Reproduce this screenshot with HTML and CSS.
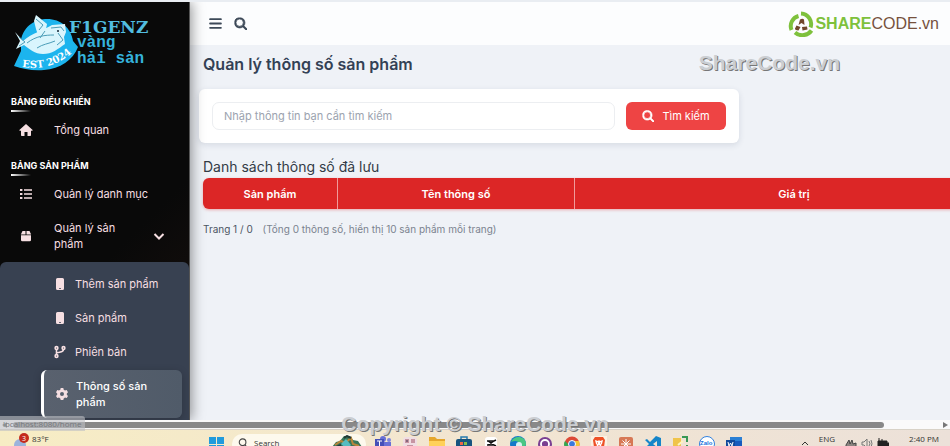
FILE: index.html
```html
<!DOCTYPE html>
<html lang="vi">
<head>
  <meta charset="UTF-8">
  <meta name="viewport" content="width=device-width, initial-scale=1.0">
  <title>Quản lý thông số sản phẩm</title>
  <link rel="stylesheet" href="styles.css">
</head>
<body>
  <svg class="defs" width="0" height="0" aria-hidden="true">
    <symbol id="i-search" viewBox="0 0 512 512"><path d="M416 208c0 45.900-14.900 88.300-40 122.700L502.600 457.400c12.500 12.500 12.500 32.800 0 45.300s-32.800 12.500-45.300 0L330.700 376c-34.400 25.200-76.800 40-122.700 40C93.100 416 0 322.900 0 208S93.100 0 208 0S416 93.100 416 208zM208 352a144 144 0 1 0 0-288 144 144 0 1 0 0 288z"/></symbol>
    <symbol id="i-phone" viewBox="0 0 12 14"><path fill-rule="evenodd" d="M3.500 1h5A1.500 1.500 0 0 1 10 2.500v9A1.500 1.500 0 0 1 8.500 13h-5A1.500 1.500 0 0 1 2 11.500v-9A1.500 1.500 0 0 1 3.500 1zM5 11v.8h2V11z"/></symbol>
  </svg>

  <div class="screen">
    <div class="window">
      <aside class="sidebar">
        <a class="logo" href="#">
          <svg viewBox="0 0 66 60" width="66" height="60">
            <path d="M7 26C10 11 22 5 33 5c14 0 24 9 26 22l5 6c-5 13-18 22-34 23C19 57 9 55 0 52l7-15z" fill="#1cb4ee"/>
            <path d="M1 18l8 9c9-8 21-11 29-16l13-1 1 8-2 5 1 7c-7 5-13 10-22 10-8 0-14-5-19-9L2 35l4-8z" fill="#d9f5fd"/>
            <path d="M20 7l2-6 11 9-1 5-8 6-2-6z" fill="#d9f5fd"/>
            <path d="M22 5l7 6-4 5M13 29c9-7 18-8 27-8M23 34c6-4 11-4 18-7M37 14l10-1 3 4M44 19l5 7-6 5M5 23l6 5-6 4M26 24l5-7" fill="none" stroke="#4b9db8"/>
            <circle cx="44" cy="17" r="1" fill="#123"/>
            <path id="arc" d="M8 53Q38 58 60 37" fill="none"/>
            <text class="logo-est"><textPath href="#arc">EST 2024</textPath></text>
          </svg>
          <span class="logo-text"><b>F1GENZ</b><span>vàng</span><span>hải sản</span></span>
        </a>

        <h2 class="nav-title">BẢNG ĐIỀU KHIỂN</h2>
        <nav class="nav">
          <a href="#"><svg viewBox="0 0 14 14"><path d="M7 1L.6 6.800c-.4.400-.2 1 .4 1H2V12c0 .600.400 1 1 1h2.500V9h3v4H11c.600 0 1-.4 1-1V7.800h1c.600 0 .8-.6.400-1z"/></svg><span>Tổng quan</span></a>
        </nav>

        <h2 class="nav-title">BẢNG SẢN PHẨM</h2>
        <nav class="nav">
          <a href="#"><svg viewBox="0 0 14 14"><path d="M1 2h2.400v2H1zM5 2.200h8v1.500H5zM1 6h2.400v2H1zM5 6.200h8v1.500H5zM1 10h2.400v2H1zM5 10.200h8v1.500H5z"/></svg><span>Quản lý danh mục</span></a>
          <a href="#"><svg viewBox="0 0 14 14"><path d="M3.500 2h3v3.500H1.800zM7.500 2h3l1.700 3.500H7.500zM2 6.300h10V11a1.300 1.300 0 0 1-1.300 1.300H3.300A1.300 1.300 0 0 1 2 11z"/></svg><span>Quản lý sản phẩm</span>
            <svg class="chevron" viewBox="0 0 12 12"><path d="M1.500 4L6 8.500 10.500 4"/></svg></a>
        </nav>

        <nav class="subnav">
          <a href="#"><svg viewBox="0 0 12 14"><use href="#i-phone"/></svg><span>Thêm sản phẩm</span></a>
          <a href="#"><svg viewBox="0 0 12 14"><use href="#i-phone"/></svg><span>Sản phẩm</span></a>
          <a href="#"><svg viewBox="0 0 14 14"><g fill="none" stroke="currentColor" stroke-width="1.600"><circle cx="3.500" cy="3" r="1.400"/><circle cx="10.500" cy="3" r="1.400"/><circle cx="3.500" cy="11" r="1.400"/><path d="M3.500 4.500v5M10.500 4.500C10.500 7.500 7 6.800 3.500 8"/></g></svg><span>Phiên bản</span></a>
          <a href="#" class="active"><svg viewBox="0 0 14 14"><path fill-rule="evenodd" d="M5.700 1h2.600l.4 1.700 1.300.7 1.700-.5L13 5.200l-1.200 1.200v1.300L13 8.900l-1.300 2.200-1.700-.5-1.300.8L8.300 13H5.700l-.4-1.600-1.300-.8-1.700.5L1 8.900l1.200-1.200V6.400L1 5.200l1.300-2.300 1.700.5 1.300-.7zM7 5a2 2 0 1 0 0 4 2 2 0 1 0 0-4z"/></svg><span>Thông số sản phẩm</span></a>
        </nav>
      </aside>

      <div class="content">
        <header class="topbar">
          <button type="button" aria-label="Menu"><svg viewBox="0 0 12 12"><path d="M1 2h10M1 6h10M1 10h10" stroke="currentColor" stroke-width="1.700" stroke-linecap="round"/></svg></button>
          <button type="button" aria-label="Mở tìm kiếm"><svg class="bold" viewBox="-16 -16 544 544"><use href="#i-search"/></svg></button>
          <a class="brand" href="#">
            <svg viewBox="0 0 26 26" width="26" height="26">
              <g fill="none" stroke="#7ec13c" stroke-width="4">
                <path d="M13 2.500a10.500 10.500 0 0 1 9.500 14"/>
                <path d="M23.500 19.500A11 10.500 0 0 1 7 21.500"/>
                <path d="M3.500 19A10.500 10.500 0 0 1 10.500 5"/>
              </g>
              <g fill="#70462c"><path d="M12 8.500q2.500-1.500 4 0l.5 5.500-3-2-3 2z"/><path d="M8.500 14.500l4 1.500-2 3.500q-4-.5-3.500-2z"/><path d="M14 16l5-.5.500 3-5 1z"/></g>
            </svg>
            <span><b>SHARE</b>CODE.vn</span>
          </a>
        </header>

        <main>
          <h1>Quản lý thông số sản phẩm</h1>
          <form class="search-card">
            <input type="text" aria-label="Tìm kiếm thông số" placeholder="Nhập thông tin bạn cần tìm kiếm">
            <button type="button"><svg class="bold" viewBox="-16 -16 544 544"><use href="#i-search"/></svg>Tìm kiếm</button>
          </form>

          <h3>Danh sách thông số đã lưu</h3>
          <table>
            <thead>
              <tr><th class="col-product">Sản phẩm</th><th class="col-name">Tên thông số</th><th>Giá trị</th></tr>
            </thead>
          </table>
          <p class="paging">Trang 1 / 0 <span>(Tổng 0 thông số, hiển thị 10 sản phẩm mỗi trang)</span></p>
        </main>
      </div>
    </div>

    <div class="scrollbar"><i class="arrow left"></i><span class="thumb"></span><i class="arrow"></i></div>

    <footer class="taskbar">
      <div class="weather">
        <svg viewBox="0 0 16 14" width="16" height="14"><circle cx="6" cy="12" r="6" fill="#9cb4dc"/><circle cx="10" cy="5" r="5" fill="#c42b1c"/><text x="8" y="8">3</text></svg>
        83°F
      </div>
      <div class="apps">
        <svg viewBox="0 0 16 16"><path d="M1 1h7v7H1zM9 1h7v7H9zM1 9h7v7H1zM9 9h7v7H9z" fill="#219bdc"/></svg>
        <div class="task-search">
          <svg viewBox="0 0 12 12"><path d="M5.500 1a4 4 0 1 1 0 8 4 4 0 0 1 0-8zM8.500 8.500L11 11" fill="none" stroke="#444" stroke-width="1.300"/></svg>
          <span>Search</span>
          <svg class="picture" viewBox="0 0 30 14"><path d="M0 12l4-5 4-1 4-5h6l3 4 5 1 4 6v4H0z" fill="#38765a"/><path d="M3 10l6-4 4 2 6-5 2 6 6 2" fill="none" stroke="#b9863b" stroke-width="2"/><path d="M9 9l5-5 5 6-4 4z" fill="#57bcc0"/><path d="M12 3l3-2 4 2M2 13l7-3" fill="none" stroke="#233a35" stroke-width="2"/></svg>
        </div>
        <svg viewBox="0 0 16 16"><circle cx="8" cy="3" r="3" fill="#6870d6"/><circle cx="14" cy="4" r="2" fill="#7f86df"/><path d="M5 6h11v9H5z" fill="#6870d6"/><path d="M0 3h9v9H0z" fill="#4550b8"/><path d="M2 5h5M4.500 5v5" stroke="#fff"/></svg>
        <svg viewBox="0 0 16 16"><rect x="1" y="1" width="14" height="14" rx="3" fill="#efdde3"/><path d="M3 3h4v4H3zM9 3h4v4H9zM5 9h6v4H5z" fill="#c795a2"/><circle cx="5" cy="5" r="1" fill="#705970"/></svg>
        <svg viewBox="0 0 16 16"><path d="M0 1h6l2 2h8v13H0z" fill="#e6a72d"/><path d="M0 5h16v11H0z" fill="#ffd15a"/></svg>
        <svg viewBox="0 0 16 16"><path d="M5 4V1h6v3" fill="none" stroke="#287caf" stroke-width="1.500"/><rect y="3" width="16" height="13" rx="2" fill="#17547f"/><path d="M4 6h3v3H4z" fill="#ef6548"/><path d="M8 6h3v3H8z" fill="#8abc49"/><path d="M4 10h3v3H4zM8 10h3v3H8z" fill="#4bb9e7"/></svg>
        <svg viewBox="0 0 16 16"><rect x="2" y="1" width="12" height="14" rx="3" fill="#fff"/><path d="M4 5h7l2-1M4 9h7l2 1M5 5l6 4M11 5L5 9" fill="none" stroke="#111" stroke-width="1.500"/></svg>
        <svg viewBox="0 0 16 16"><circle cx="8" cy="8" r="8" fill="#1479c9"/><path d="M1 6c3-8 15-6 15 2 0 3-6 4-7 1 1-4-4-5-8-3z" fill="#4ac783"/><circle cx="9" cy="9" r="3" fill="#d9f3f4"/></svg>
        <svg viewBox="0 0 16 16"><circle cx="8" cy="8" r="7" fill="#7a3f92"/><circle cx="8" cy="8" r="4" fill="#7a3f92" stroke="#fff" stroke-width="1.800"/></svg>
        <svg viewBox="0 0 16 16"><circle cx="8" cy="8" r="7.500" fill="#dc4937"/><path d="M1 5l5 5-1 5C0 13-1 8 1 5z" fill="#34a853"/><path d="M10 5h5c2 6-2 11-7 10z" fill="#f5c536"/><circle cx="8" cy="8" r="3.500" fill="#3b78dc" stroke="#fff"/></svg>
        <svg class="current" viewBox="0 0 16 16"><path d="M4 1h8l2 3-1 7-5 4-5-4-1-7z" fill="#ee5127"/><path d="M4 4l3 1 1-1 1 1 3-1-1 4-1 1 1 2-3 2-3-2 1-2-1-1z" fill="#fff"/><path d="M6 7h1M9 7h1M7 10h2" stroke="#ee5127"/></svg>
        <svg viewBox="0 0 16 16"><rect x="1" y="1" width="14" height="14" rx="2" fill="#d77855"/><path d="M8 3v10M3 8h10M4.500 4.500l7 7M11.500 4.500l-7 7" stroke="#fff"/></svg>
        <svg viewBox="0 0 16 16"><path d="M11 0l5 2v12l-5 2-6-6-3 3-2-1 4-4-4-4 2-1 3 3zM12 5L8 8l4 3z" fill="#1685c9"/></svg>
        <svg viewBox="0 0 16 16"><path d="M1 2h8v12H1z" fill="#f0c44b"/><path d="M10 1h5v5M15 9v5h-4" fill="none" stroke="#399855" stroke-width="2"/><path d="M6 9l5-4" stroke="#fff4bd" stroke-width="2"/></svg>
        <svg viewBox="0 0 16 16"><circle cx="8" cy="8" r="7.500" fill="#fff" stroke="#3181df"/><text class="zalo" x="1" y="9">Zalo</text></svg>
        <svg viewBox="0 0 16 16"><path d="M4 1h12v14H4z" fill="#2b7fd4"/><path d="M4 5h12v5H4z" fill="#185abd"/><path d="M0 4h9v9H0z" fill="#124a9c"/><path d="M2 6l1 4 1.500-3L6 10l1-4" fill="none" stroke="#fff"/></svg>
      </div>
      <div class="tray">
        <svg viewBox="0 0 12 12"><path d="M3 8l3-3 3 3" fill="none" stroke="#333"/></svg>
        <span class="lang">ENG</span>
        <svg viewBox="0 0 12 12"><path d="M1 8l3-5 1 4 2-4 1 4 3-1v5H1z" fill="#8a8480" stroke="#444"/></svg>
        <svg viewBox="0 0 12 12"><path d="M1 5h2l3-3v9L3 8H1zM8 4q2 3 0 5M10 3q2 4 0 7" fill="none" stroke="#777"/></svg>
        <svg viewBox="0 0 12 12"><path d="M1 4h9v7H1zM10 6h2v3h-2zM2 1v4M5 2v3" fill="#222" stroke="#222"/></svg>
        <time>2:40 PM</time>
      </div>
    </footer>

    <div class="status">localhost:8080/home</div>
    <div class="mark mark-top">ShareCode.vn</div>
    <div class="mark mark-bottom">Copyright © ShareCode.vn</div>
  </div>
</body>
</html>
```

FILE: styles.css
```css
* { box-sizing: border-box; }
body { margin: 0; font-family: Inter, "Noto Sans", sans-serif; font-size: 12px; line-height: 16px; color: #334155; }
a { color: inherit; text-decoration: none; }
button, input { font: inherit; }
h1, h2, h3, p { margin: 0; }
.defs { position: absolute; }

.screen { position: relative; display: flex; flex-direction: column; height: 100vh; overflow: hidden; border-top: 2px solid #e9edf2; }
.window { display: flex; flex: 1; min-height: 0; overflow: hidden; background: #eff2f7; }

/* sidebar */
.sidebar { z-index: 1; flex: none; width: 190px; color: #f6dfe2; background: linear-gradient(135deg, #090909 60%, #1c120f); border-right: 1px solid #555; box-shadow: 2px 0 12px rgba(0, 0, 0, .4); font-size: 11px; }
.logo { display: flex; height: 94px; padding: 12px 0 0 14px; }
.logo svg { flex: none; margin-right: -11px; }
.logo-est { font: 700 10px "DejaVu Serif", serif; fill: #fff; }
.logo-text { display: flex; flex-direction: column; padding-top: 4px; color: #35b3dc; font: 700 16px/18px "Liberation Mono", monospace; }
.logo-text b { font: 700 17px/18px "DejaVu Serif", serif; color: #52bde0; }
.logo-text span { padding-left: 8px; }
.logo-text b + span { line-height: 14px; }
.nav-title { padding-left: 11px; margin-bottom: 2px; font-size: 9px; line-height: 12px; font-weight: 700; color: #fff; }
.nav-title::after { content: ""; display: block; width: 20px; height: 2px; margin-top: 2px; background: linear-gradient(90deg, #fff, transparent); }
.nav + .nav-title { margin-top: 14px; }
.nav, .subnav { display: flex; flex-direction: column; gap: 2px; }
.nav a { display: flex; align-items: center; padding: 8px 24px 8px 19px; }
.nav svg { flex: none; width: 14px; height: 14px; fill: currentColor; }
.nav span { flex: 1; margin-left: 21px; }
.nav .chevron { width: 12px; height: 12px; margin-left: 14px; fill: none; stroke: currentColor; stroke-width: 2; }
.subnav { margin-top: 2px; padding: 6px 7px 4px 41px; background: #384151; border-radius: 6px 6px 0 0; }
.subnav a { display: flex; align-items: center; gap: 8px; padding: 8px 12px; }
.subnav svg { flex: none; width: 14px; height: 14px; fill: currentColor; }
.subnav .active { padding-right: 30px; border-left: 3px solid #fff; border-radius: 6px; background: linear-gradient(90deg, #59616e, #505b69); box-shadow: 0 2px 8px rgba(0, 0, 0, .2); color: #fff; font-weight: 500; gap: 7px; padding-left: 11px; }
.subnav .active svg { color: #f6dfe2; }

/* content */
.content { flex: 1; min-width: 0; overflow: hidden; }
.topbar { display: flex; align-items: center; gap: 12px; height: 43px; padding: 0 11px 0 19px; background: #fcfdfe; }
.topbar button { display: flex; padding: 0; border: 0; background: none; color: #3d4958; }
.topbar button svg { width: 13px; height: 13px; fill: currentColor; }
.bold { stroke: currentColor; stroke-width: 28; }
.brand { display: flex; align-items: center; gap: 1px; margin-left: auto; font: 16px/24px "Liberation Sans", sans-serif; color: #76513d; }
.brand b { color: #7ec13c; }
main { padding: 8px 0 0 13px; }
h1 { font-size: 16px; line-height: 22px; font-weight: 600; color: #334155; }
.search-card { display: flex; gap: 11px; width: 540px; max-width: 96%; margin: 14px 0 14px -4px; padding: 13px; border-radius: 6px; background: #fff; box-shadow: 0 2px 6px rgba(30, 50, 80, .12); }
.search-card input { flex: 1; min-width: 0; height: 28px; padding: 0 11px; border: 1px solid #eceef1; border-radius: 7px; background: #fff; font-size: 11px; }
.search-card input::placeholder { color: #9ca3af; }
.search-card button { display: flex; align-items: center; justify-content: center; gap: 8px; width: 100px; height: 28px; padding: 0; border: 0; border-radius: 6px; background: #ee4444; color: #fff; font-size: 11px; }
.search-card svg { width: 12px; height: 12px; fill: currentColor; }
h3 { font-size: 14px; line-height: 20px; font-weight: 400; color: #333b46; }
table { width: 810px; table-layout: fixed; border-spacing: 0; margin-top: 1px; border-radius: 6px; background: #dc2626; box-shadow: 0 1px 3px rgba(220, 38, 38, .35); }
th { height: 31px; padding: 0; color: #fff; font-size: 11px; font-weight: 600; }
th + th { border-left: 1px solid #f09b9b; }
.col-product { width: 134px; }
.col-name { width: 237px; }
.paging { margin-top: 12px; font-size: 10px; color: #4b5563; }
.paging span { margin-left: 7px; color: #7b838f; }

/* browser scrollbar and desktop taskbar */
.scrollbar { display: flex; align-items: center; flex: none; height: 10px; padding: 0 2px; background: #fafafa; border-bottom: 1px solid #d8d2c7; }
.thumb { flex: 1; height: 6px; margin: 0 59px 0 6px; border-radius: 3px; background: #898989; }
.arrow { border: 3px solid transparent; border-left: 5px solid #777; border-right: 0; }
.arrow.left { border-left: 0; border-right: 5px solid #777; }
.taskbar { display: grid; grid-template-columns: 208px 1fr auto; flex: none; height: 16px; overflow: hidden; background: linear-gradient(90deg, #f7edc4, #f2e5d1 50%, #ece1d9); color: #333; font: 8px/12px "Open Sans", sans-serif; }
.weather { display: flex; gap: 2px; padding: 3px 0 0 14px; }
.weather text { font-size: 7px; fill: #fff; }
.apps { display: flex; gap: 11px; padding-top: 6px; }
.apps > svg { flex: none; width: 16px; height: 16px; }
.task-search { display: flex; flex: none; gap: 6px; width: 134px; height: 20px; margin: -2px -2px 0 -3px; padding: 3px 4px 0 6px; border-radius: 10px; background: #fdf9ed; }
.task-search svg { width: 10px; height: 10px; margin-top: 1px; }
.task-search .picture { width: 30px; height: 14px; margin: -2px 0 0 auto; }
.apps .current { background: #fbf1e3; }
.zalo { font: 700 6px "Liberation Sans", sans-serif; fill: #1873db; }
.tray { display: flex; gap: 4px; padding: 3px 11px 0 0; }
.tray svg { width: 12px; height: 12px; margin-top: 4px; }
.tray .lang { margin: 0 6px 0 4px; }
.tray time { margin-left: 16px; }

/* overlays */
.status { position: absolute; z-index: 2; left: 0; bottom: 15px; padding: 0 4px 0 3px; border-radius: 0 3px 0 0; background: rgba(190, 192, 196, .6); color: #73767b; font: 8px/15px "Open Sans", sans-serif; }
.mark { position: absolute; z-index: 3; color: #cbced2; font: 700 21px/22px "Liberation Sans", sans-serif; text-shadow: 1px 1px 0 #777; white-space: nowrap; }
.mark-top { top: 50px; right: 110px; }
.mark-bottom { bottom: 11px; left: 50%; transform: translateX(-50%); }
```
